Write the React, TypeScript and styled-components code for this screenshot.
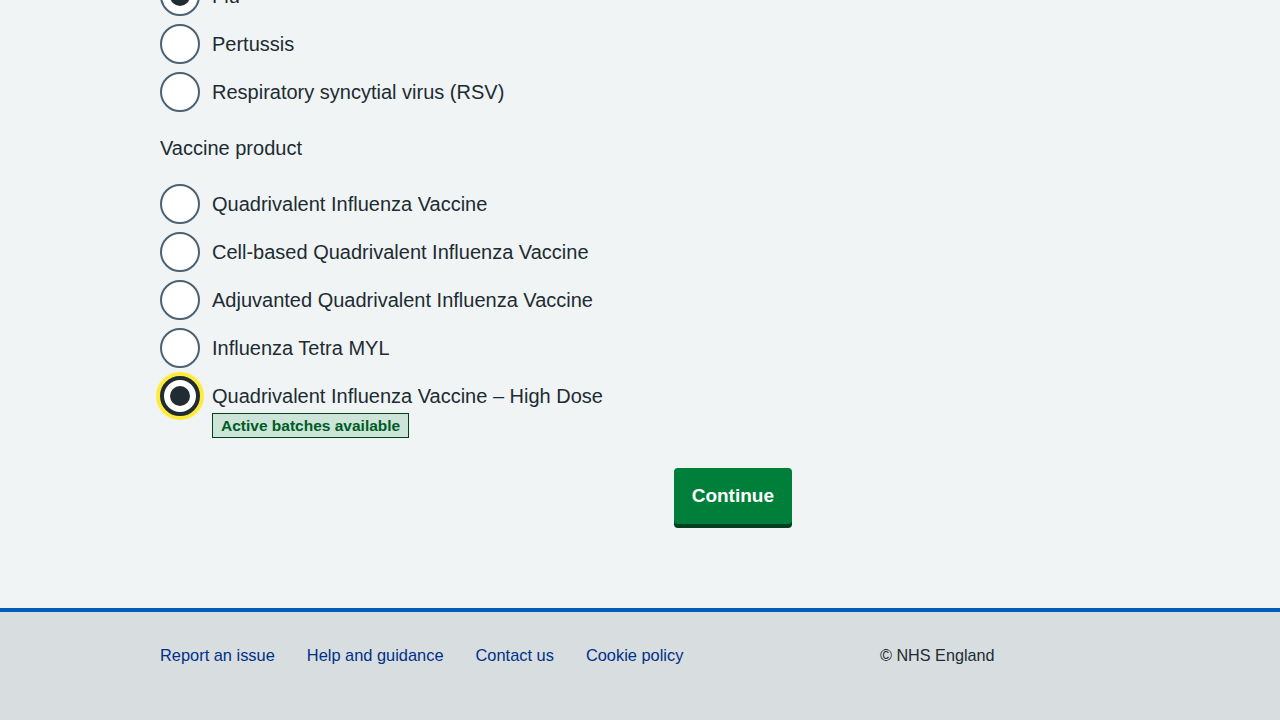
import React from 'react';
import styled, { createGlobalStyle, css } from 'styled-components';

const GlobalStyle = createGlobalStyle`
  html, body {
    margin: 0;
    padding: 0;
    background-color: #f0f4f5;
    font-family: 'Liberation Sans', Arial, sans-serif;
    color: #212b32;
  }
  body {
    overflow: hidden;
  }
`;

const Page = styled.div`
  display: flex;
  flex-direction: column;
  min-height: 100vh;
`;

const Main = styled.main`
  width: 960px;
  margin: -24px auto 0;
  padding-bottom: 80px;
`;

const Column = styled.form`
  width: 632px;
  display: flex;
  flex-direction: column;
`;

const RadioGroup = styled.div<{ gap?: number }>`
  display: flex;
  flex-direction: column;
  gap: 8px;
  margin-bottom: ${(props) => props.gap ?? 0}px;
`;

const Legend = styled.div`
  font-size: 20px;
  line-height: 28px;
  margin-bottom: 22px;
`;

const RadioItem = styled.div`
  display: flex;
  align-items: flex-start;
  gap: 12px;
`;

const Radio = styled.span<{ checked?: boolean; focused?: boolean }>`
  position: relative;
  flex: 0 0 auto;
  box-sizing: border-box;
  width: 40px;
  height: 40px;
  border-radius: 50%;
  background-color: #ffffff;
  border: 2px solid #4c6272;
  ${(props) =>
    props.checked &&
    css`
      &::after {
        content: '';
        position: absolute;
        left: 50%;
        top: 50%;
        width: 20px;
        height: 20px;
        margin: -10px 0 0 -10px;
        border-radius: 50%;
        background-color: #212b32;
      }
    `};
  ${(props) =>
    props.focused &&
    css`
      border: 4px solid #212b32;
      box-shadow: 0 0 0 4px #ffeb3b;
    `};
`;

const LabelBlock = styled.div`
  display: flex;
  flex-direction: column;
  align-items: flex-start;
  padding-top: 6px;
`;

const LabelText = styled.label`
  font-size: 20px;
  line-height: 28px;
  color: #212b32;
`;

const Tag = styled.span`
  margin-top: 3px;
  display: inline-block;
  padding: 3px 8px;
  font-size: 15.5px;
  line-height: 17px;
  font-weight: bold;
  color: #005a25;
  background-color: #cce5d8;
  border: 1px solid #00401e;
`;

const Actions = styled.div`
  display: flex;
  justify-content: flex-end;
  margin-top: 30px;
`;

const Button = styled.button`
  font-family: inherit;
  font-size: 19px;
  line-height: 28px;
  font-weight: bold;
  color: #ffffff;
  background-color: #007f3b;
  border: 2px solid transparent;
  border-radius: 4px;
  padding: 12px 16px;
  box-shadow: 0 4px 0 #00401e;
  cursor: pointer;
`;

const Footer = styled.footer`
  margin-top: auto;
  background-color: #d8dde0;
  border-top: 4px solid #005eb8;
  padding: 31px 0 53px;
`;

const FooterInner = styled.div`
  width: 960px;
  margin: 0 auto;
  display: flex;
  align-items: center;
`;

const FooterList = styled.ul`
  width: 720px;
  display: flex;
  gap: 32px;
  list-style: none;
  margin: 0;
  padding: 0;
`;

const FooterLink = styled.a`
  font-size: 16.4px;
  line-height: 24px;
  color: #003087;
  text-decoration: none;
`;

const Copyright = styled.p`
  margin: 0;
  font-size: 16.2px;
  line-height: 24px;
  color: #212b32;
`;

const diseases = [
  { label: 'Flu', checked: true },
  { label: 'Pertussis' },
  { label: 'Respiratory syncytial virus (RSV)' },
];

const products = [
  { label: 'Quadrivalent Influenza Vaccine' },
  { label: 'Cell-based Quadrivalent Influenza Vaccine' },
  { label: 'Adjuvanted Quadrivalent Influenza Vaccine' },
  { label: 'Influenza Tetra MYL' },
  { label: 'Quadrivalent Influenza Vaccine – High Dose', checked: true, focused: true, tag: 'Active batches available' },
];

const footerLinks = ['Report an issue', 'Help and guidance', 'Contact us', 'Cookie policy'];

interface IOption {
  label: string;
  checked?: boolean;
  focused?: boolean;
  tag?: string;
}

const RadioRow: React.FC<{ option: IOption }> = ({ option }) => (
  <RadioItem>
    <Radio checked={option.checked} focused={option.focused} />
    <LabelBlock>
      <LabelText>{option.label}</LabelText>
      {option.tag && <Tag>{option.tag}</Tag>}
    </LabelBlock>
  </RadioItem>
);

const App: React.FC = () => (
  <Page>
    <GlobalStyle />
    <Main>
      <Column onSubmit={(e) => e.preventDefault()}>
        <RadioGroup gap={22}>
          {diseases.map((option) => (
            <RadioRow key={option.label} option={option} />
          ))}
        </RadioGroup>
        <Legend>Vaccine product</Legend>
        <RadioGroup>
          {products.map((option) => (
            <RadioRow key={option.label} option={option} />
          ))}
        </RadioGroup>
        <Actions>
          <Button type="submit">Continue</Button>
        </Actions>
      </Column>
    </Main>
    <Footer>
      <FooterInner>
        <FooterList>
          {footerLinks.map((link) => (
            <li key={link}>
              <FooterLink href="#">{link}</FooterLink>
            </li>
          ))}
        </FooterList>
        <Copyright>© NHS England</Copyright>
      </FooterInner>
    </Footer>
  </Page>
);

export default App;
